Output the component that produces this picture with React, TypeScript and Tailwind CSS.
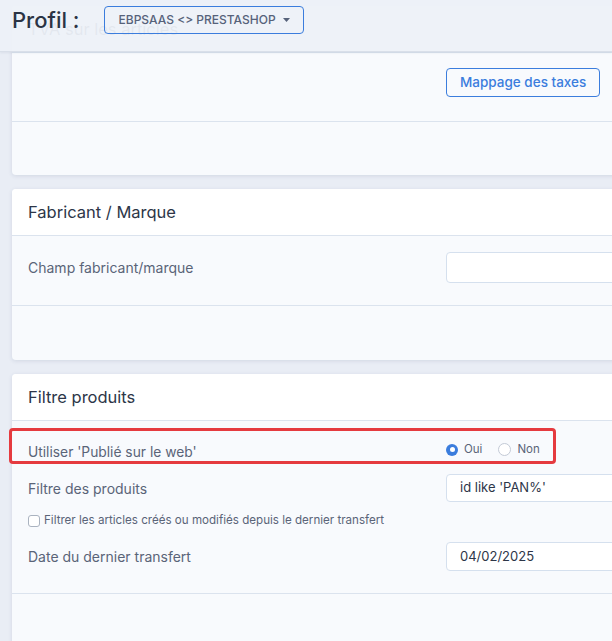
import React from "react";

const font = { fontFamily: "Inter, 'Open Sans', sans-serif" };

function Card({
  title,
  children,
  footer,
}: {
  title: string;
  children: React.ReactNode;
  footer: string;
}) {
  return (
    <div className="w-[640px] rounded-[4px] bg-[#f8fafd] shadow-[0_1px_4px_rgba(40,60,100,0.12)]">
      <div className="flex h-[47px] items-center rounded-t-[4px] border-b border-[#dbe3ee] bg-white px-4">
        <span className="text-[16.5px] text-[#2d3648]">{title}</span>
      </div>
      {children}
      <div className={`border-t border-[#dbe3ee] ${footer}`} />
    </div>
  );
}

function TextInput({ value, h }: { value?: string; h: string }) {
  return (
    <div
      className={`flex ${h} w-[200px] items-center rounded-[4px] border border-[#d5e0ee] bg-white px-[13px] text-[13px] text-[#2d3648]`}
    >
      {value}
    </div>
  );
}

export default function App() {
  return (
    <div
      className="relative h-[641px] w-[612px] overflow-hidden bg-[#e9edf5]"
      style={font}
    >
      <div className="flex flex-col gap-[14px] pl-[12px] pt-[6px]">
        <Card title="TVA sur les articles" footer="h-[54px]">
          <div className="flex h-[68px] items-start pl-[434px] pt-[15px]">
            <button className="h-[29px] rounded-[4px] border border-[#3b7ddd] bg-transparent px-[13px] text-[13.5px] font-medium text-[#3b7ddd]">
              Mappage des taxes
            </button>
          </div>
        </Card>

        <Card title="Fabricant / Marque" footer="h-[55px]">
          <div className="flex h-[69px] items-start pl-4 pr-0 pt-[16px]">
            <div className="flex h-[31px] w-[418px] items-center text-[14px] text-[#5a6478]">
              Champ fabricant/marque
            </div>
            <TextInput h="h-[31px]" />
          </div>
        </Card>

        <Card title="Filtre produits" footer="h-[60px]">
          <div className="flex h-[172px] flex-col pt-[7px]">
            <div className="relative flex h-[36px] items-start pl-4 pt-[14px]">
              <div className="pointer-events-none absolute -left-[3px] top-0 h-[36px] w-[547px] rounded-[4px] border-[3px] border-[#e53a3f]" />
              <span className="w-[418px] text-[13.8px] text-[#5a6478]">
                Utiliser 'Publié sur le web'
              </span>
              <div className="-mt-[1px] flex items-center text-[11.5px] text-[#5a6478]">
                <span className="flex h-[12px] w-[12px] items-center justify-center rounded-full bg-[#3b7ddd]">
                  <span className="h-[5px] w-[5px] rounded-full bg-white" />
                </span>
                <span className="ml-[6px]">Oui</span>
                <span className="ml-[16px] h-[13px] w-[13px] rounded-full border border-[#c3cad6] bg-white" />
                <span className="ml-[6px]">Non</span>
              </div>
            </div>
            <div className="mt-[10px] flex h-[28px] items-center pl-4">
              <span className="w-[418px] text-[14px] text-[#5a6478]">
                Filtre des produits
              </span>
              <TextInput h="h-[28px]" value="id like 'PAN%'" />
            </div>
            <div className="mt-[13px] flex h-[12px] items-center pl-[16px] text-[11.6px] text-[#5a6478]">
              <span className="mr-[4px] h-[12px] w-[12px] shrink-0 rounded-[3px] border border-[#aab3c0] bg-white" />
              Filtrer les articles créés ou modifiés depuis le dernier transfert
            </div>
            <div className="mt-[15px] flex h-[29px] items-center pl-4">
              <span className="w-[418px] text-[14px] text-[#5a6478]">
                Date du dernier transfert
              </span>
              <TextInput h="h-[29px]" value="04/02/2025" />
            </div>
          </div>
        </Card>
      </div>

      <div className="absolute left-0 top-0 flex h-[52px] w-full items-start border-b border-[#d9dfe9] bg-[#edf1f8]/95 pl-[12px] pt-[6px] shadow-[0_1px_2px_rgba(40,60,100,0.08)]">
        <span className="text-[22px] font-medium leading-[28px] text-[#2b3445]">
          Profil :
        </span>
        <button className="ml-[24px] flex h-[28px] items-center rounded-[4px] border border-[#3b7ddd] bg-transparent pl-[14px] pr-[13px] text-[12px] font-medium text-[#56627a]">
          EBPSAAS &lt;&gt; PRESTASHOP
          <svg width="7" height="4" viewBox="0 0 7 4" className="ml-[7px]">
            <path d="M0 0h7L3.5 4z" fill="#56627a" />
          </svg>
        </button>
      </div>
    </div>
  );
}
